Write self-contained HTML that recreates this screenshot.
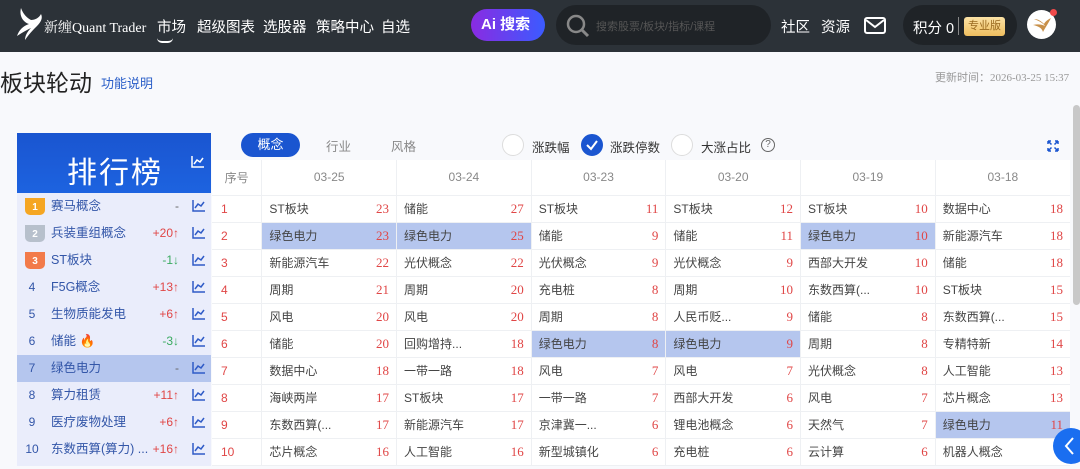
<!DOCTYPE html>
<html><head><meta charset="utf-8"><style>
*{margin:0;padding:0;box-sizing:border-box}
body{width:1080px;height:466px;overflow:hidden;background:#f8f9fc;font-family:"Liberation Sans","Noto Sans CJK SC",sans-serif;position:relative}
.nav{position:absolute;left:0;top:0;width:1080px;height:52px;background:#2c3238;color:#fff}
.nav span{position:absolute;top:16px;font-size:14.5px}
.logo{position:absolute;left:44px;top:17px;font-size:14px;font-family:"Liberation Serif","Noto Serif CJK SC",serif}
.ai{position:absolute;left:471px;top:9px;width:74px;height:32px;border-radius:16px;background:linear-gradient(90deg,#8a2be2,#3b5bff);color:#fff;font-size:15px;line-height:32px;padding-left:10px;font-weight:bold}
.srch{position:absolute;left:556px;top:5px;width:215px;height:40px;border-radius:20px;background:#1f2327}
.srch i{position:absolute;left:40px;top:13px;font-size:11px;color:#555;font-style:normal}
.pts{position:absolute;left:903px;top:5px;width:114px;height:40px;border-radius:20px;background:#1f2327}
.pro{position:absolute;left:964px;top:17px;width:41px;height:19px;border-radius:3px;background:linear-gradient(#fbe2a6,#eebd5e);color:#9a6b21;font-size:11px;line-height:19px;text-align:center}
.title{position:absolute;left:0;top:64px;font-size:23px;color:#222}
.fn{position:absolute;left:101px;top:73px;font-size:13px;color:#2a5ec8}
.upd{position:absolute;left:935px;top:69px;font-size:11px;color:#999;font-family:"Liberation Serif","Noto Sans CJK SC",serif;white-space:nowrap}
.lp{position:absolute;left:17px;top:133px;width:194px;height:333px;background:#eaedfb}
.lh{height:60px;background:linear-gradient(#1a55d0,#1d63e0);color:#fff;font-size:30px;line-height:82px;letter-spacing:2px;position:relative;padding-left:50px}
.lr{height:27px;position:relative;font-size:12.5px;color:#3356a8;line-height:27px}
.lr .n{position:absolute;left:0;width:30px;text-align:center;font-size:12px}
.lr .t{position:absolute;left:34px}
.lr .c{position:absolute;right:32px;font-size:12px}
.up{color:#e04646}.dn{color:#3aaa60}
.ch{position:absolute;right:6px;top:7px}
.sel{background:#b5c6ee}
.crown{position:absolute;left:8px;top:5px;width:20px;height:17px;border-radius:0 0 5px 5px;color:#fff;font-size:10px;text-align:center;line-height:20px;font-weight:bold}
.tab{position:absolute;top:136px;font-size:12.5px;color:#888}
.tabon{position:absolute;left:241px;top:133px;width:59px;height:24px;border-radius:12px;background:#1a55d0;color:#fff;font-size:13px;text-align:center;line-height:24px}
.rad{position:absolute;top:134px;width:22px;height:22px;border-radius:50%;border:1px solid #ddd;background:#fff}
.rl{position:absolute;top:137px;font-size:12.5px;color:#333}
.tbl{position:absolute;left:212px;top:160px;width:858px;background:#fff;border-collapse:collapse;font-size:12px}
.tbl td{height:27px;border-bottom:1px solid #eef0f3;color:#444;padding:0 7px;white-space:nowrap}
.tbl tr.h td{height:35px;color:#888;text-align:center;border-left:1px solid #eef0f3;font-size:12px}
.tbl td.i{width:50px;color:#e04646;padding-left:9px}
.tbl td.v{color:#e04646;text-align:right;font-family:"Liberation Serif",serif;font-size:13px;width:34px}
.tbl td.s{width:101px;border-left:1px solid #eef0f3}
.tbl td.hl{background:#b5c6ee}
</style></head><body>
<div class="nav">
<svg style="position:absolute;left:15px;top:6px" width="30" height="36" viewBox="0 0 30 36"><path d="M6 2C4 10 8 16 14 18C8 20 4 24 2 30C8 26 12 24 16 22C12 26 10 30 10 34C14 28 18 24 22 20C26 16 28 12 26 8C24 12 20 14 16 14C12 12 8 8 6 2Z" fill="#fff"/></svg>
<div class="logo">新缠Quant Trader</div>
<span style="left:157px">市场</span>
<div style="position:absolute;left:157px;top:38px;width:16px;height:5px;border-bottom:2px solid #fff;border-radius:0 0 8px 8px"></div>
<span style="left:197px">超级图表</span><span style="left:263px">选股器</span><span style="left:316px">策略中心</span><span style="left:381px">自选</span>
<div class="ai">Ai 搜索</div>
<div class="srch"><svg style="position:absolute;left:10px;top:9px" width="24" height="24"><circle cx="10" cy="10" r="8" fill="none" stroke="#888" stroke-width="2.5"/><path d="M16 16l6 6" stroke="#888" stroke-width="3"/></svg><i>搜索股票/板块/指标/课程</i></div>
<span style="left:781px">社区</span><span style="left:821px">资源</span>
<svg style="position:absolute;left:864px;top:17px" width="22" height="17"><rect x="1" y="1" width="20" height="15" rx="2" fill="none" stroke="#fff" stroke-width="2"/><path d="M2 3l9 7 9-7" fill="none" stroke="#fff" stroke-width="2"/></svg>
<div class="pts"><span style="left:10px;top:12px">积分 0</span><div style="position:absolute;left:55px;top:12px;width:1px;height:18px;background:#888"></div></div>
<div class="pro">专业版</div>
<div style="position:absolute;left:1027px;top:10px;width:29px;height:29px;border-radius:50%;background:#fff"></div>
<svg style="position:absolute;left:1031px;top:13px" width="22" height="22"><path d="M3 6C8 8 12 10 14 13C10 11 6 11 2 12C7 13 11 15 12 19C14 15 17 11 20 5C16 7 14 9 13 11C10 8 7 6 3 6Z" fill="#c8904a"/></svg>
<div style="position:absolute;left:1050px;top:9px;width:7px;height:7px;border-radius:50%;background:#f04a4a"></div>
</div>
<div class="title">板块轮动</div><div class="fn">功能说明</div>
<div class="upd">更新时间：2026-03-25 15:37</div>
<div style="position:absolute;left:1073px;top:105px;width:7px;height:200px;border-radius:4px;background:#c8c8c8"></div>

<div class="lp">
<div class="lh">排行榜<svg class="ch" style="right:7px;top:23px" width="13" height="12"><path d="M1 0V11H13M3 8L6 4L9 6L12 2" fill="none" stroke="#fff" stroke-width="1.5"/></svg></div>
<div class="lr"><div class="crown" style="background:#f5a623">1</div><span class="t">赛马概念</span><span class="c" style="color:#666">-</span><svg class="ch" width="13" height="12"><path d="M1 0V11H13M3 8L6 4L9 6L12 2" fill="none" stroke="#2f5bc7" stroke-width="1.5"/></svg></div>
<div class="lr"><div class="crown" style="background:#b7c0cc">2</div><span class="t">兵装重组概念</span><span class="c up">+20↑</span><svg class="ch" width="13" height="12"><path d="M1 0V11H13M3 8L6 4L9 6L12 2" fill="none" stroke="#2f5bc7" stroke-width="1.5"/></svg></div>
<div class="lr"><div class="crown" style="background:#f27a4a">3</div><span class="t">ST板块</span><span class="c dn">-1↓</span><svg class="ch" width="13" height="12"><path d="M1 0V11H13M3 8L6 4L9 6L12 2" fill="none" stroke="#2f5bc7" stroke-width="1.5"/></svg></div>
<div class="lr"><span class="n">4</span><span class="t">F5G概念</span><span class="c up">+13↑</span><svg class="ch" width="13" height="12"><path d="M1 0V11H13M3 8L6 4L9 6L12 2" fill="none" stroke="#2f5bc7" stroke-width="1.5"/></svg></div>
<div class="lr"><span class="n">5</span><span class="t">生物质能发电</span><span class="c up">+6↑</span><svg class="ch" width="13" height="12"><path d="M1 0V11H13M3 8L6 4L9 6L12 2" fill="none" stroke="#2f5bc7" stroke-width="1.5"/></svg></div>
<div class="lr"><span class="n">6</span><span class="t">储能 <b style="color:#f05030">🔥</b></span><span class="c dn">-3↓</span><svg class="ch" width="13" height="12"><path d="M1 0V11H13M3 8L6 4L9 6L12 2" fill="none" stroke="#2f5bc7" stroke-width="1.5"/></svg></div>
<div class="lr sel"><span class="n">7</span><span class="t">绿色电力</span><span class="c" style="color:#666">-</span><svg class="ch" width="13" height="12"><path d="M1 0V11H13M3 8L6 4L9 6L12 2" fill="none" stroke="#2f5bc7" stroke-width="1.5"/></svg></div>
<div class="lr"><span class="n">8</span><span class="t">算力租赁</span><span class="c up">+11↑</span><svg class="ch" width="13" height="12"><path d="M1 0V11H13M3 8L6 4L9 6L12 2" fill="none" stroke="#2f5bc7" stroke-width="1.5"/></svg></div>
<div class="lr"><span class="n">9</span><span class="t">医疗废物处理</span><span class="c up">+6↑</span><svg class="ch" width="13" height="12"><path d="M1 0V11H13M3 8L6 4L9 6L12 2" fill="none" stroke="#2f5bc7" stroke-width="1.5"/></svg></div>
<div class="lr"><span class="n">10</span><span class="t">东数西算(算力) ...</span><span class="c up">+16↑</span><svg class="ch" width="13" height="12"><path d="M1 0V11H13M3 8L6 4L9 6L12 2" fill="none" stroke="#2f5bc7" stroke-width="1.5"/></svg></div>
</div>

<div class="tabon">概念</div><div class="tab" style="left:326px">行业</div><div class="tab" style="left:391px">风格</div>
<div class="rad" style="left:502px"></div><div class="rl" style="left:532px">涨跌幅</div>
<div class="rad" style="left:581px;background:#1a55d0;border-color:#1a55d0"><svg width="20" height="20"><path d="M5 10L9 14L15 6" fill="none" stroke="#fff" stroke-width="2"/></svg></div><div class="rl" style="left:610px">涨跌停数</div>
<div class="rad" style="left:671px"></div><div class="rl" style="left:701px">大涨占比</div>
<div style="position:absolute;left:761px;top:138px;width:14px;height:14px;border-radius:50%;border:1px solid #666;font-size:10px;text-align:center;line-height:12px;color:#666">?</div>
<svg style="position:absolute;left:1047px;top:140px" width="12" height="12"><path d="M1 1L4.5 4.5M11 1L7.5 4.5M1 11L4.5 7.5M11 11L7.5 7.5M1 1h3M1 1v3M11 1h-3M11 1v3M1 11h3M1 11v-3M11 11h-3M11 11v-3" stroke="#1a55d0" stroke-width="1.5" fill="none"/></svg>

<table class="tbl">
<tr class="h"><td style="border-left:none;width:50px">序号</td><td colspan="2">03-25</td><td colspan="2">03-24</td><td colspan="2">03-23</td><td colspan="2">03-20</td><td colspan="2">03-19</td><td colspan="2">03-18</td></tr>
<tr><td class="i">1</td><td class="s">ST板块</td><td class="v">23</td><td class="s">储能</td><td class="v">27</td><td class="s">ST板块</td><td class="v">11</td><td class="s">ST板块</td><td class="v">12</td><td class="s">ST板块</td><td class="v">10</td><td class="s">数据中心</td><td class="v">18</td></tr>
<tr><td class="i">2</td><td class="s hl">绿色电力</td><td class="v hl">23</td><td class="s hl">绿色电力</td><td class="v hl">25</td><td class="s">储能</td><td class="v">9</td><td class="s">储能</td><td class="v">11</td><td class="s hl">绿色电力</td><td class="v hl">10</td><td class="s">新能源汽车</td><td class="v">18</td></tr>
<tr><td class="i">3</td><td class="s">新能源汽车</td><td class="v">22</td><td class="s">光伏概念</td><td class="v">22</td><td class="s">光伏概念</td><td class="v">9</td><td class="s">光伏概念</td><td class="v">9</td><td class="s">西部大开发</td><td class="v">10</td><td class="s">储能</td><td class="v">18</td></tr>
<tr><td class="i">4</td><td class="s">周期</td><td class="v">21</td><td class="s">周期</td><td class="v">20</td><td class="s">充电桩</td><td class="v">8</td><td class="s">周期</td><td class="v">10</td><td class="s">东数西算(...</td><td class="v">10</td><td class="s">ST板块</td><td class="v">15</td></tr>
<tr><td class="i">5</td><td class="s">风电</td><td class="v">20</td><td class="s">风电</td><td class="v">20</td><td class="s">周期</td><td class="v">8</td><td class="s">人民币贬...</td><td class="v">9</td><td class="s">储能</td><td class="v">8</td><td class="s">东数西算(...</td><td class="v">15</td></tr>
<tr><td class="i">6</td><td class="s">储能</td><td class="v">20</td><td class="s">回购增持...</td><td class="v">18</td><td class="s hl">绿色电力</td><td class="v hl">8</td><td class="s hl">绿色电力</td><td class="v hl">9</td><td class="s">周期</td><td class="v">8</td><td class="s">专精特新</td><td class="v">14</td></tr>
<tr><td class="i">7</td><td class="s">数据中心</td><td class="v">18</td><td class="s">一带一路</td><td class="v">18</td><td class="s">风电</td><td class="v">7</td><td class="s">风电</td><td class="v">7</td><td class="s">光伏概念</td><td class="v">8</td><td class="s">人工智能</td><td class="v">13</td></tr>
<tr><td class="i">8</td><td class="s">海峡两岸</td><td class="v">17</td><td class="s">ST板块</td><td class="v">17</td><td class="s">一带一路</td><td class="v">7</td><td class="s">西部大开发</td><td class="v">6</td><td class="s">风电</td><td class="v">7</td><td class="s">芯片概念</td><td class="v">13</td></tr>
<tr><td class="i">9</td><td class="s">东数西算(...</td><td class="v">17</td><td class="s">新能源汽车</td><td class="v">17</td><td class="s">京津冀一...</td><td class="v">6</td><td class="s">锂电池概念</td><td class="v">6</td><td class="s">天然气</td><td class="v">7</td><td class="s hl">绿色电力</td><td class="v hl">11</td></tr>
<tr><td class="i">10</td><td class="s">芯片概念</td><td class="v">16</td><td class="s">人工智能</td><td class="v">16</td><td class="s">新型城镇化</td><td class="v">6</td><td class="s">充电桩</td><td class="v">6</td><td class="s">云计算</td><td class="v">6</td><td class="s">机器人概念</td><td class="v">6</td></tr>
</table>
<div style="position:absolute;left:1053px;top:428px;width:36px;height:36px;border-radius:50%;background:#1a6ef0"><svg width="36" height="36"><path d="M20 10L13 18L20 26" fill="none" stroke="#fff" stroke-width="2"/></svg></div>
</body></html>
